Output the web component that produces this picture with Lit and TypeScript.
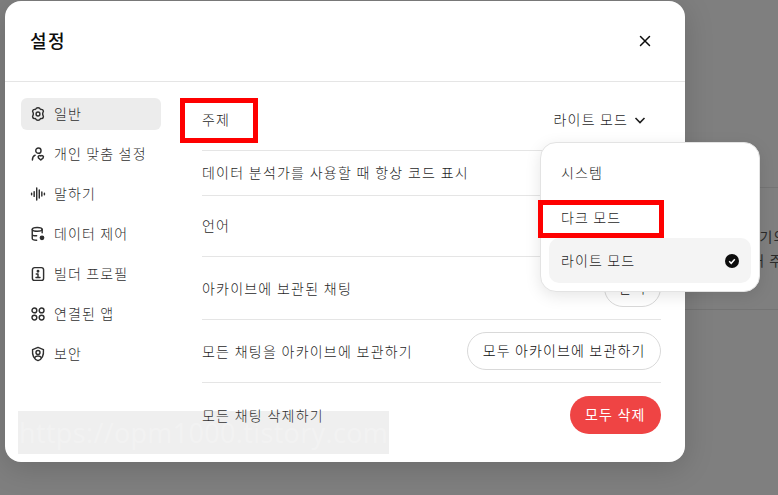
import { LitElement, css, html, svg } from "lit";
import { customElement } from "lit/decorators.js";

const navItems = [
  { label: "일반", icon: svg`<circle cx="10" cy="10" r="2.400"/><path d="M8 2.800c.8-.9 3.200-.9 4 0 .5.6.8 1.400 1.700 1.500 1.200-.2 2.700.8 3 2 .2.900-.500 1.500-.700 2.200-.2.700-.2 2.300.1 3 .4.700.9 1.300.600 2.200-.3 1.200-1.800 2.200-3 2-.9 0-1.200 1-1.700 1.500-.8.900-3.200.9-4 0-.5-.5-.8-1.500-1.700-1.500-1.200.2-2.700-.8-3-2-.3-.9.2-1.500.6-2.200.3-.7.3-2.300.1-3-.2-.7-.9-1.300-.7-2.200.3-1.200 1.800-2.200 3-2 .9-.1 1.200-.9 1.700-1.500z"/>`, active: true },
  { label: "개인 맞춤 설정", icon: svg`<circle cx="10.500" cy="5.800" r="3.300"/><path d="M3 17.500c0-3 1.200-5 3.500-6"/><path d="M13.500 17.500l-3-2.700a1.900 1.900 0 0 1 3-2.300 1.900 1.900 0 0 1 3 2.300z"/>` },
  { label: "말하기", icon: svg`<path d="M2 9v2M5.200 7v6M8.400 2.500v15M11.600 5v10M14.800 7.500v5M18 9v2"/>` },
  { label: "데이터 제어", icon: svg`<ellipse cx="9" cy="4.200" rx="6.200" ry="2.400"/><path d="M2.800 4.200v11.500c0 1.300 2.300 2.100 5.500 2.100M15.200 4.200v4.300M2.800 10.200c0 1.300 2.300 2.100 5.500 2.100"/><circle cx="15" cy="14.800" r="2.100" fill="currentColor"/>` },
  { label: "빌더 프로필", icon: svg`<rect x="3" y="2" width="14" height="16" rx="2.800"/><circle cx="10" cy="6.600" r=".9" fill="currentColor"/><path d="M7.800 10h2.200v4.200M7.500 14.300h5"/>` },
  { label: "연결된 앱", icon: svg`<circle cx="5.500" cy="5.500" r="3"/><circle cx="14.500" cy="5.500" r="3"/><circle cx="5.500" cy="14.500" r="3"/><circle cx="14.500" cy="14.500" r="3"/>` },
  { label: "보안", icon: svg`<path d="M10 1.800l6.800 2.700c.5 5.800.2 11.300-6.800 13.800C3 15.800 2.700 10.300 3.200 4.500z"/><circle cx="10" cy="8.200" r="2.500"/><path d="M5.800 14.500c.9-1.400 2.400-2.100 4.200-2.100s3.300.7 4.200 2.100"/>` },
];

@customElement("app-root")
export class AppRoot extends LitElement {
  static styles = css`
    :host {
      display: block;
      width: 778px;
      height: 495px;
      overflow: hidden;
      position: relative;
      background: #7f7f7f;
      font-family: "Noto Sans CJK KR", "Noto Sans", sans-serif;
      color: #0d0d0d;
      font-size: 14px;
      letter-spacing: 1.15px;
    }
    .backdrop-lines { position: absolute; left: 685px; right: 0; top: 187px; height: 121px;
      border-top: 1px solid #747474; border-bottom: 1px solid #747474; }
    .peek { position: absolute; left: 751px; top: 224px; line-height: 24px; color: #2b2b2b; white-space: nowrap; }
    .modal {
      position: absolute; left: 5px; top: 1px; width: 680px; height: 461px;
      background: #fff; border-radius: 16px; overflow: hidden;
    }
    .shadow {
      position: absolute; left: 5px; top: 1px; width: 680px; height: 461px; border-radius: 16px;
      box-shadow: 0 6px 30px rgba(0,0,0,.16);
    }
    header {
      height: 81px; box-sizing: border-box; border-bottom: 1px solid #e5e5e5;
      display: flex; align-items: center; justify-content: space-between;
      padding: 0 32px 0 25px;
    }
    h2 { margin: 0 0 2px; font-size: 18px; font-weight: 500; letter-spacing: 1.5px; }
    .close { width: 16px; height: 16px; color: #0d0d0d; display: block; }
    .body { display: flex; }
    nav { width: 140px; margin: 16px 0 0 16px; display: flex; flex-direction: column; }
    .nav-item {
      box-sizing: border-box; height: 32px; margin-bottom: 8px; border-radius: 6px; display: flex;
      align-items: center; gap: 8px; padding: 0 9px 2px; color: #2f2f2f; white-space: nowrap; font-weight: 300;
    }
    .nav-item.active { background: #ececec; }
    .nav-item svg { width: 16px; height: 16px; flex: none; fill: none; stroke: currentColor; stroke-width: 1.800; stroke-linecap: round; stroke-linejoin: round; margin-top: 2px; }
    .panel { margin-left: 41px; width: 459px; }
    .row { box-sizing: border-box; display: flex; align-items: center; justify-content: space-between; border-bottom: 1px solid #e5e5e5; color: #1f1f1f; white-space: nowrap; font-weight: 300; padding-bottom: 2px; }
    .row:last-child { border-bottom: none; }
    .row.first { padding-top: 7px; }
    .row.tall { padding-bottom: 0; }
    .label { letter-spacing: 1.2px; word-spacing: .3px; }
    .pill { box-sizing: border-box; height: 38px; border: 1px solid #d9d9d9; border-radius: 19px; padding: 0 14.5px 2px; display: flex; align-items: center; color: #0d0d0d; }
    .pill.small { padding: 0 13.5px 2px; }
    .danger { border: none; background: #ef4444; color: #fff; padding: 0 15.5px 2px; font-weight: 400; }
    .select { display: flex; align-items: center; gap: 5px; margin-right: 14px; }
    .select svg { width: 14px; height: 14px; fill: none; stroke: currentColor; stroke-width: 1.600; margin-top: 2px; }
    .menu {
      position: absolute; left: 540px; top: 142px; width: 220px; height: 150px; box-sizing: border-box;
      background: #fff; border: 1px solid #e3e3e3; border-radius: 16px; padding: 8px;
      box-shadow: 0 4px 16px rgba(0,0,0,.1); display: flex; flex-direction: column; font-weight: 300;
    }
    .opt { height: 44px; display: flex; align-items: center; justify-content: space-between; padding: 0 12px 2px; border-radius: 10px; color: #1f1f1f; }
    .opt.nudge { padding-bottom: 0; }
    .opt.selected { background: #f4f4f4; margin-top: auto; }
    .opt svg { width: 14px; height: 14px; display: block; margin-top: 2px; }
    .mark { position: absolute; box-sizing: border-box; border: 5px solid #fe0000; }
    .mark.topic { left: 180px; top: 98px; width: 78px; height: 45px; }
    .mark.dark { left: 538px; top: 200px; width: 126px; height: 38px; }
    .watermark {
      position: absolute; left: 18px; top: 411px; width: 371px; height: 43px; background: rgba(128,128,128,.13);
      color: rgba(255,255,255,.22); font: 27px/43px "Open Sans", sans-serif; letter-spacing: .35px; white-space: nowrap; overflow: hidden; padding-left: 1px; box-sizing: border-box;
    }
  `;

  render() {
    return html`
      <div class="backdrop-lines"></div>
      <div class="peek">&nbsp;&nbsp;기의<br />내 주</div>
      <div class="shadow"></div>
      <section class="modal">
        <header>
          <h2>설정</h2>
          <svg class="close" viewBox="0 0 16 16" fill="none" stroke="currentColor" stroke-width="1.500" stroke-linecap="round"><path d="M3.500 3.500l9 9M12.500 3.500l-9 9" /></svg>
        </header>
        <div class="body">
          <nav>
            ${navItems.map(
              (n) => html`<div class="nav-item ${n.active ? "active" : ""}"><svg viewBox="0 0 20 20">${n.icon}</svg><span>${n.label}</span></div>`,
            )}
          </nav>
          <div class="panel">
            <div class="row first" style="height:69px">
              <span class="label">주제</span>
              <div class="select"><span>라이트 모드</span><svg viewBox="0 0 14 14"><path d="M2.500 5l4.500 4.500L11.500 5" /></svg></div>
            </div>
            <div class="row" style="height:45px"><span class="label">데이터 분석가를 사용할 때 항상 코드 표시</span></div>
            <div class="row" style="height:61px"><span class="label">언어</span></div>
            <div class="row tall" style="height:63px">
              <span class="label">아카이브에 보관된 채팅</span>
              <div class="pill small">관리</div>
            </div>
            <div class="row tall" style="height:63px">
              <span class="label">모든 채팅을 아카이브에 보관하기</span>
              <div class="pill">모두 아카이브에 보관하기</div>
            </div>
            <div class="row tall" style="height:63px">
              <span class="label">모든 채팅 삭제하기</span>
              <div class="pill danger">모두 삭제</div>
            </div>
          </div>
        </div>
      </section>
      <div class="watermark">https://opm1000.tistory.com</div>
      <div class="menu">
        <div class="opt">시스템</div>
        <div class="opt nudge">다크 모드</div>
        <div class="opt selected">
          <span>라이트 모드</span>
          <svg viewBox="0 0 14 14"><circle cx="7" cy="7" r="7" fill="#0d0d0d" /><path d="M4.200 7.300l2 2 3.600-4" fill="none" stroke="#fff" stroke-width="1.500" /></svg>
        </div>
      </div>
      <div class="mark topic"></div>
      <div class="mark dark"></div>
    `;
  }
}
